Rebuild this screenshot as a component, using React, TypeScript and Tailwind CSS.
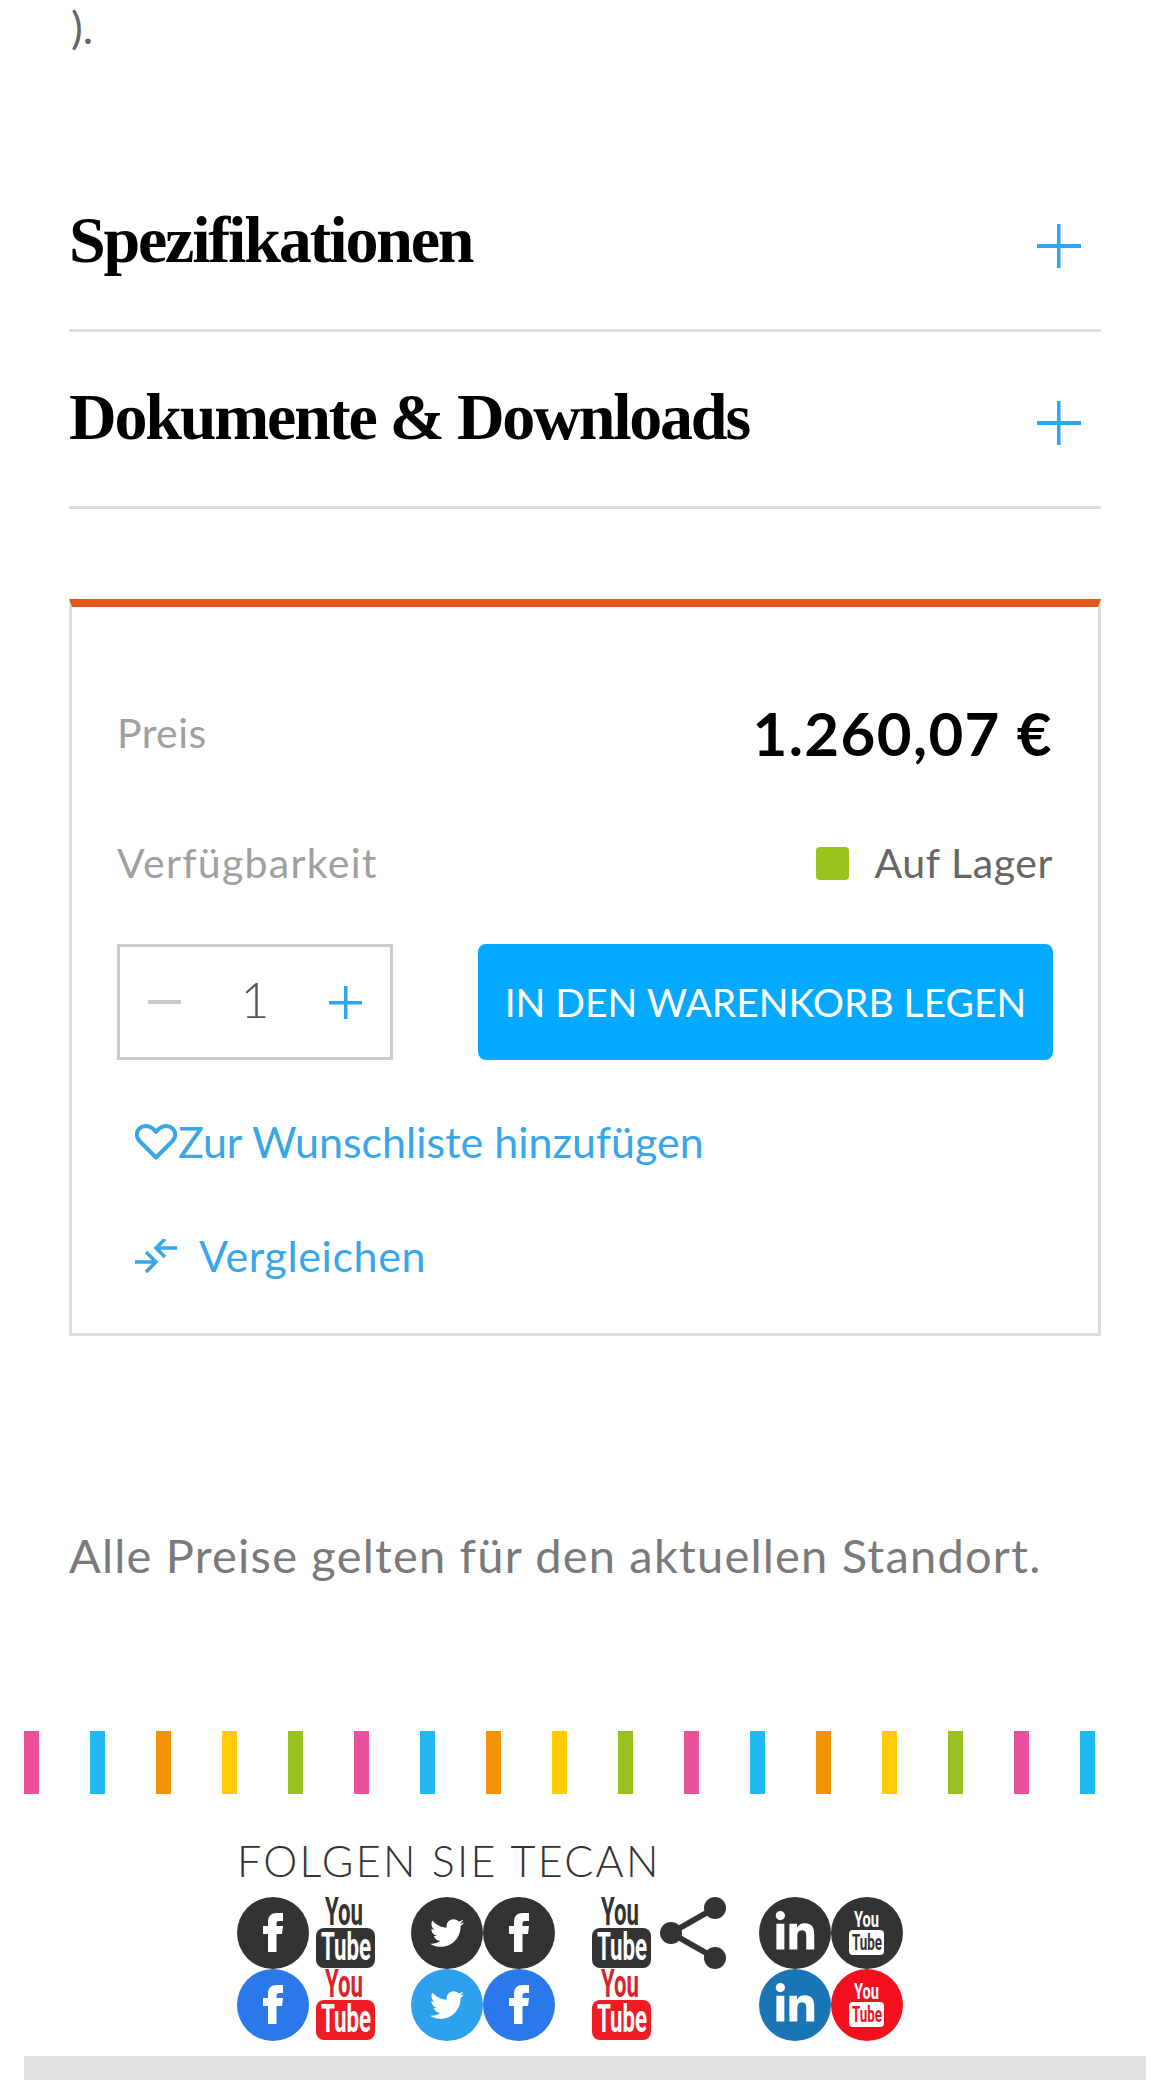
import React from 'react';
import { FaLinkedinIn, FaTwitter } from 'react-icons/fa';

const stripes = ['#e8529b', '#22b8f0', '#f39205', '#ffcc06', '#99c221'];

const Plus: React.FC = () => (
    <svg width="44" height="44" viewBox="0 0 44 44" className="text-[#2ba6f2]">
        <rect x="20" y="0" width="3.5" height="44" fill="currentColor" />
        <rect x="0" y="20" width="44" height="4" fill="currentColor" />
    </svg>
);

const Accordion: React.FC<{ title: string }> = ({ title }) => (
    <div className="h-[177px] flex items-center justify-between border-b-[3px] border-[#dddddd]">
        <h2 className="font-['Liberation_Serif',serif] font-bold text-[66px] tracking-[-2.2px] leading-none text-black -mt-[4px]">{title}</h2>
        <div className="mr-[20px] mt-[8px]">
            <Plus />
        </div>
    </div>
);

const Circle: React.FC<{ color: string; children: React.ReactNode }> = ({ color, children }) => (
    <div className="w-[72px] h-[72px] rounded-full flex items-center justify-center text-white" style={{ backgroundColor: color }}>
        {children}
    </div>
);

const FacebookCircle: React.FC<{ color: string }> = ({ color }) => (
    <svg width="72" height="72" viewBox="0 0 72 72">
        <circle cx="36" cy="36" r="36" fill={color} />
        <path d="M31 55 V37 H26 V29 H31 V25 C31 19 34 16 40 16 H46 V24 H42 C40 24 39.5 25 39.5 27 V29 H46 L45 37 H39.5 V55 Z" fill="#fff" />
    </svg>
);

const YouTubeLogo: React.FC<{ color: string; you: string }> = ({ color, you }) => (
    <svg width="72" height="72" viewBox="0 0 72 72" className="overflow-visible">
        <text x="16" y="28" fontFamily="Roboto, sans-serif" fontWeight="700" fontSize="39" fill={you} textLength="38" lengthAdjust="spacingAndGlyphs">You</text>
        <rect x="7" y="31" width="59" height="40" rx="8" fill={color} />
        <text x="12" y="63" fontFamily="Roboto, sans-serif" fontWeight="700" fontSize="39" fill="#fff" textLength="50" lengthAdjust="spacingAndGlyphs">Tube</text>
    </svg>
);

const YouTubeCircle: React.FC<{ color: string }> = ({ color }) => (
    <svg width="72" height="72" viewBox="0 0 72 72" className="overflow-visible">
        <circle cx="36" cy="36" r="36" fill={color} />
        <text x="23" y="30" fontFamily="Roboto, sans-serif" fontWeight="700" fontSize="22" fill="#fff" textLength="25" lengthAdjust="spacingAndGlyphs">You</text>
        <rect x="18" y="33" width="35" height="25" rx="4" fill="#fff" />
        <text x="21" y="53" fontFamily="Roboto, sans-serif" fontWeight="700" fontSize="22" fill={color} textLength="30" lengthAdjust="spacingAndGlyphs">Tube</text>
    </svg>
);

const ShareIcon: React.FC = () => (
    <svg width="72" height="72" viewBox="0 0 72 72" fill="#333333" stroke="#333333">
        <path d="M14 36 L58 11 M14 36 L58 61" strokeWidth="6" fill="none" />
        <circle cx="14" cy="36" r="11" stroke="none" />
        <circle cx="58" cy="11" r="11" stroke="none" />
        <circle cx="58" cy="61" r="11" stroke="none" />
    </svg>
);

const App: React.FC = () => {
    return (
        <div className="w-[1170px] h-[2080px] overflow-hidden bg-white font-['Lato',sans-serif]">
            <div className="px-[69px]">
                <p className="h-[155px] text-[44px] leading-[54px] text-[#666666] pl-[2px]">).</p>
                <Accordion title="Spezifikationen" />
                <Accordion title="Dokumente & Downloads" />

                <div className="mt-[90px] h-[737px] border-x-[3px] border-b-[3px] border-t-[8px] border-x-[#dddddd] border-b-[#dddddd] border-t-[#e2581a] px-[45px] pt-[86px]">
                    <div className="h-[80px] flex items-center justify-between">
                        <span className="text-[41px] tracking-[0.4px] text-[#a0a0a0]">Preis</span>
                        <span className="text-[60px] tracking-[1.4px] font-bold text-black">1.260,07 €</span>
                    </div>
                    <div className="mt-[50px] h-[80px] flex items-center justify-between">
                        <span className="text-[41px] tracking-[1.3px] text-[#a0a0a0]">Verfügbarkeit</span>
                        <span className="flex items-center gap-[25px] text-[41px] tracking-[0.6px] text-[#666666]">
                            <span className="w-[33px] h-[33px] rounded-[4px] bg-[#9bc31c]" />
                            Auf Lager
                        </span>
                    </div>
                    <div className="mt-[41px] h-[116px] flex justify-between">
                        <div className="w-[276px] border-[3px] border-[#cccccc] flex items-center justify-between px-[28px]">
                            <span className="w-[33px] h-[4px] bg-[#cccccc]" />
                            <span className="text-[50px] leading-none -mt-[6px] text-[#555555] font-light">1</span>
                            <svg width="33" height="33" viewBox="0 0 33 33" className="text-[#2ba6f2]">
                                <rect x="15" y="0" width="3.5" height="33" fill="currentColor" />
                                <rect x="0" y="15" width="33" height="3.5" fill="currentColor" />
                            </svg>
                        </div>
                        <button className="w-[575px] rounded-[8px] bg-[#05a9ff] text-white text-[39px] font-normal">IN DEN WARENKORB LEGEN</button>
                    </div>
                    <div className="mt-[52px] pl-[18px] flex items-center h-[60px] text-[43px] text-[#38a6e8] font-normal">
                        <svg width="42" height="36" viewBox="0 0 42 36" fill="none" stroke="currentColor" strokeWidth="4" strokeLinejoin="round">
                            <path d="M21 33.5 L5 17.5 C0.5 13 1 7.5 4.5 4.5 C9 0.5 16 1.5 21 8 C26 1.5 33 0.5 37.5 4.5 C41 7.5 41.5 13 37 17.5 Z" />
                        </svg>
                        <span className="ml-[1px]">Zur Wunschliste hinzufügen</span>
                    </div>
                    <div className="mt-[54px] pl-[18px] flex items-center h-[60px] text-[43px] tracking-[0.6px] text-[#38a6e8] font-normal">
                        <svg width="42" height="34" viewBox="0 0 42 34" fill="none" stroke="currentColor" strokeWidth="3.5">
                            <path d="M0 23 H21 M11 13 L21 23 L11 33 M42 9 H21 M30 0 L21 9 L30 18" />
                        </svg>
                        <span className="ml-[22px]">Vergleichen</span>
                    </div>
                </div>

                <p className="mt-[189px] text-[47px] tracking-[1.2px] leading-[60px] text-[#7a7a7a]">Alle Preise gelten für den aktuellen Standort.</p>
            </div>

            <div className="mt-[146px] ml-[24px] w-[1122px] h-[63px] flex gap-[51px] overflow-hidden">
                {Array.from({ length: 17 }).map((_, i) => (
                    <span key={i} className="w-[15px] h-full shrink-0" style={{ backgroundColor: stripes[i % 5] }} />
                ))}
            </div>

            <div className="ml-[237px] mt-[38px] flex flex-col">
                <p className="text-[43px] leading-[57px] tracking-[2.3px] text-[#333333] font-light mb-[8px]">FOLGEN SIE TECAN</p>
                <div className="flex gap-[30px]">
                    <div className="grid grid-cols-2 w-[144px]">
                        <FacebookCircle color="#333333" />
                        <YouTubeLogo color="#333333" you="#333333" />
                        <FacebookCircle color="#2a78ea" />
                        <YouTubeLogo color="#ee1c24" you="#d8232f" />
                    </div>
                    <div className="grid grid-cols-2 w-[144px]">
                        <Circle color="#333333"><FaTwitter size={34} /></Circle>
                        <FacebookCircle color="#333333" />
                        <Circle color="#2ea1ee"><FaTwitter size={34} /></Circle>
                        <FacebookCircle color="#2a78ea" />
                    </div>
                    <div className="grid grid-cols-2 w-[144px]">
                        <YouTubeLogo color="#333333" you="#333333" />
                        <ShareIcon />
                        <YouTubeLogo color="#ee1c24" you="#d8232f" />
                    </div>
                    <div className="grid grid-cols-2 w-[144px]">
                        <Circle color="#333333"><FaLinkedinIn size={44} /></Circle>
                        <YouTubeCircle color="#333333" />
                        <Circle color="#1a75b5"><FaLinkedinIn size={44} /></Circle>
                        <YouTubeCircle color="#f40f1f" />
                    </div>
                </div>
            </div>

            <div className="mt-[15px] mx-[24px] h-[24px] bg-[#e1e1e1]" />
        </div>
    );
};

export default App;
